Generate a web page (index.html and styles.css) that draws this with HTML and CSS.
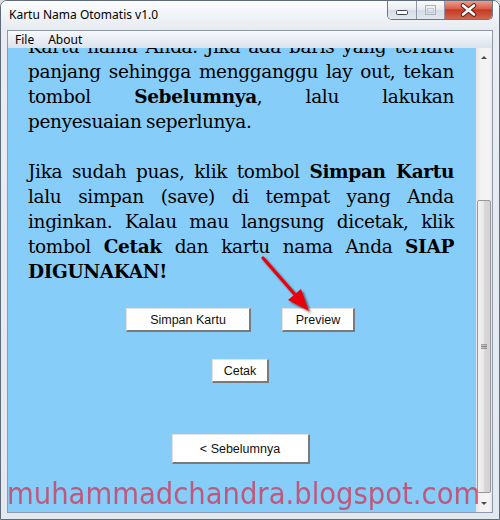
FILE: index.html
```html
<!DOCTYPE html>
<html>
<head>
<meta charset="utf-8">
<link rel="stylesheet" href="styles.css">
</head>
<body>
<div class="window">
  <div class="titlebar">
    <span class="title">Kartu Nama Otomatis v1.0</span>
    <div class="caption-buttons">
      <div class="cap cap-min">
        <svg width="28" height="18" viewBox="0 0 28 18"><rect x="8.5" y="9.5" width="11" height="4" rx="1" fill="#fff" stroke="#3a4453"/></svg>
      </div>
      <div class="cap cap-max">
        <svg width="27" height="18" viewBox="0 0 27 18"><rect x="8.5" y="4.5" width="10" height="9" fill="none" stroke="#aab2bd"/><rect x="10.5" y="7.5" width="6" height="4" fill="none" stroke="#c4cad2"/></svg>
      </div>
      <div class="cap cap-close">
        <svg width="47" height="18" viewBox="0 0 47 18"><path d="M18 4.5 L29 13.5 M29 4.5 L18 13.5" stroke="#5a2018" stroke-width="4.6" stroke-linecap="round"/><path d="M18 4.5 L29 13.5 M29 4.5 L18 13.5" stroke="#fff" stroke-width="2.6" stroke-linecap="round"/></svg>
      </div>
    </div>
  </div>
  <div class="frame-body">
    <div class="client">
      <div class="menubar"><span class="menu-item">File</span><span class="menu-item">About</span></div>
      <div class="main">
        <div class="pane">
          <div class="text">
            <p class="para">
              <span class="ln j">Kartu nama Anda. Jika ada baris yang terlalu</span>
              <span class="ln j">panjang sehingga mengganggu lay out, tekan</span>
              <span class="ln j">tombol <b>Sebelumnya</b>, lalu lakukan</span>
              <span class="ln">penyesuaian seperlunya.</span>
            </p>
            <p class="para">
              <span class="ln j">Jika sudah puas, klik tombol <b>Simpan Kartu</b></span>
              <span class="ln j">lalu simpan (save) di tempat yang Anda</span>
              <span class="ln j">inginkan. Kalau mau langsung dicetak, klik</span>
              <span class="ln j">tombol <b>Cetak</b> dan kartu nama Anda <b>SIAP</b></span>
              <span class="ln"><b>DIGUNAKAN!</b></span>
            </p>
          </div>
          <div class="actions">
            <div class="row row-first">
              <div class="btn btn-simpan">Simpan Kartu</div>
              <div class="btn btn-preview">Preview</div>
            </div>
            <div class="row row-cetak">
              <div class="btn btn-cetak">Cetak</div>
            </div>
            <div class="row row-back">
              <div class="btn btn-back">&lt; Sebelumnya</div>
            </div>
          </div>
          <svg class="arrow" width="468" height="464" viewBox="0 0 468 464">
            <defs>
              <filter id="sh" x="-50%" y="-50%" width="200%" height="200%">
                <feDropShadow dx="2" dy="2" stdDeviation="1.3" flood-color="#000" flood-opacity="0.55"/>
              </filter>
            </defs>
            <g filter="url(#sh)">
              <line x1="255" y1="210" x2="290" y2="250" stroke="#e8000b" stroke-width="3.2" stroke-linecap="round"/>
              <polygon points="301,263 280,252 293,241" fill="#e8000b"/>
            </g>
          </svg>
        </div>
        <div class="scrollbar">
          <div class="sb-btn">
            <svg width="16" height="17" viewBox="0 0 16 17"><path d="M5 11 L8 8 L11 11 Z" fill="#4a4a4a"/></svg>
          </div>
          <div class="sb-gap-top"></div>
          <div class="sb-thumb">
            <svg width="14" height="8" viewBox="0 0 14 8"><path d="M3.5 1.5 H10.5 M3.5 3.5 H10.5 M3.5 5.5 H10.5" stroke="#6a6a6a" stroke-width="1"/></svg>
          </div>
          <div class="sb-gap-bottom"></div>
          <div class="sb-btn">
            <svg width="16" height="17" viewBox="0 0 16 17"><path d="M5 7 L8 10 L11 7 Z" fill="#4a4a4a"/></svg>
          </div>
        </div>
      </div>
    </div>
  </div>
  <div class="watermark">muhammadchandra.blogspot.com</div>
</div>
</body>
</html>
```

FILE: styles.css
```css
html, body {
  margin: 0;
  padding: 0;
  background: #d9dee6;
}

.window {
  position: relative;
  box-sizing: border-box;
  width: 500px;
  height: 520px;
  border: 1px solid #5f6b7a;
  border-radius: 7px 7px 0 0;
  background: linear-gradient(#f6f8fb 0%, #e9edf2 6%, #e4e9ef 100%);
  display: flex;
  flex-direction: column;
  overflow: hidden;
}

.titlebar {
  height: 29px;
  display: flex;
  justify-content: space-between;
  align-items: flex-start;
  background: linear-gradient(#fbfcfd, #e6ebf1);
}

.title {
  font-family: "Noto Sans", "DejaVu Sans", sans-serif;
  font-size: 12px;
  color: #000;
  margin: 6px 0 0 8px;
  line-height: 16px;
}

.caption-buttons {
  display: flex;
  margin: -1px 6px 0 0;
  border: 1px solid #6d7888;
  border-top: none;
  border-radius: 0 0 5px 5px;
  overflow: hidden;
  height: 19px;
}

.cap {
  height: 19px;
  display: flex;
  align-items: center;
  justify-content: center;
}

.cap-min {
  width: 28px;
  background: linear-gradient(#fdfdfe, #e7ebf0 50%, #d6dce5 51%, #e3e8ee);
  border-right: 1px solid #8d97a5;
}

.cap-max {
  width: 27px;
  background: linear-gradient(#fdfdfe, #e7ebf0 50%, #d6dce5 51%, #e3e8ee);
  border-right: 1px solid #8d97a5;
}

.cap-close {
  width: 47px;
  background: linear-gradient(#eea595 0%, #d9604b 45%, #c53a24 52%, #d0654d 100%);
}

.frame-body {
  flex: 1;
  display: flex;
  padding: 0 6px 6px 6px;
}

.client {
  flex: 1;
  display: flex;
  flex-direction: column;
  border: 1px solid #8e99a7;
  background: #f0f0f0;
}

.menubar {
  height: 17px;
  display: flex;
  align-items: center;
  background: linear-gradient(#f7f9fc, #e6ebf3 60%, #dbe2ed);
  font-family: "Noto Sans", "DejaVu Sans", sans-serif;
  font-size: 12px;
  color: #000;
  padding-left: 6px;
}

.menu-item {
  padding: 0 7px 0 1px;
  line-height: 17px;
  margin-right: 6px;
}

.main {
  flex: 1;
  display: flex;
  min-height: 0;
}

.pane {
  position: relative;
  width: 468px;
  background: #87cdf9;
  overflow: hidden;
}

.text {
  margin-top: -14px;
  padding: 0 22px 0 20px;
  font-family: "DejaVu Serif", "Liberation Serif", serif;
  font-size: 18.5px;
  line-height: 25px;
  color: #000;
}

.para {
  margin: 0 0 25px 0;
}

.para:last-child {
  margin-bottom: 0;
}

.ln {
  display: block;
  white-space: nowrap;
  letter-spacing: -0.35px;
  word-spacing: -1px;
}

.j {
  text-align: justify;
  text-align-last: justify;
}

.actions {
  display: flex;
  flex-direction: column;
  align-items: center;
  padding-right: 3px;
}

.row {
  display: flex;
  justify-content: center;
  gap: 31px;
}

.row-first {
  margin-top: 24px;
}

.row-cetak {
  margin-top: 27px;
}

.row-back {
  margin-top: 51px;
}

.btn {
  box-sizing: border-box;
  height: 24px;
  background: #fff;
  border-top: 1px solid #e3e3e3;
  border-left: 1px solid #e3e3e3;
  border-right: 2px solid #7a7a7a;
  border-bottom: 2px solid #7a7a7a;
  font-family: "Liberation Sans", Arial, sans-serif;
  font-size: 12.5px;
  color: #111;
  display: flex;
  align-items: center;
  justify-content: center;
}

.btn-simpan { width: 125px; }
.btn-preview { width: 73px; }
.btn-cetak { width: 57px; }
.btn-back { width: 138px; height: 30px; }

.arrow {
  position: absolute;
  left: 0;
  top: 0;
  pointer-events: none;
}

.scrollbar {
  width: 16px;
  display: flex;
  flex-direction: column;
  background: linear-gradient(90deg, #e6e6e6, #f2f2f2 30%, #f4f4f4 80%, #e8e8e8);
}

.sb-btn {
  height: 17px;
  display: flex;
  align-items: center;
  justify-content: center;
}

.sb-gap-top {
  height: 135px;
}

.sb-thumb {
  box-sizing: border-box;
  height: 293px;
  margin: 0 1px;
  border: 1px solid #989898;
  border-radius: 2px;
  background: linear-gradient(90deg, #f3f3f3, #e9e9e9 45%, #d9d9d9 55%, #d2d2d2);
  display: flex;
  align-items: center;
  justify-content: center;
}

.sb-gap-bottom {
  flex: 1;
}

.watermark {
  position: absolute;
  left: 6px;
  top: 477px;
  font-family: "DejaVu Sans", sans-serif;
  font-size: 31px;
  line-height: 31px;
  color: rgba(215, 40, 70, 0.7);
  white-space: nowrap;
  transform: scaleX(0.886);
  transform-origin: 0 0;
  pointer-events: none;
}
```
